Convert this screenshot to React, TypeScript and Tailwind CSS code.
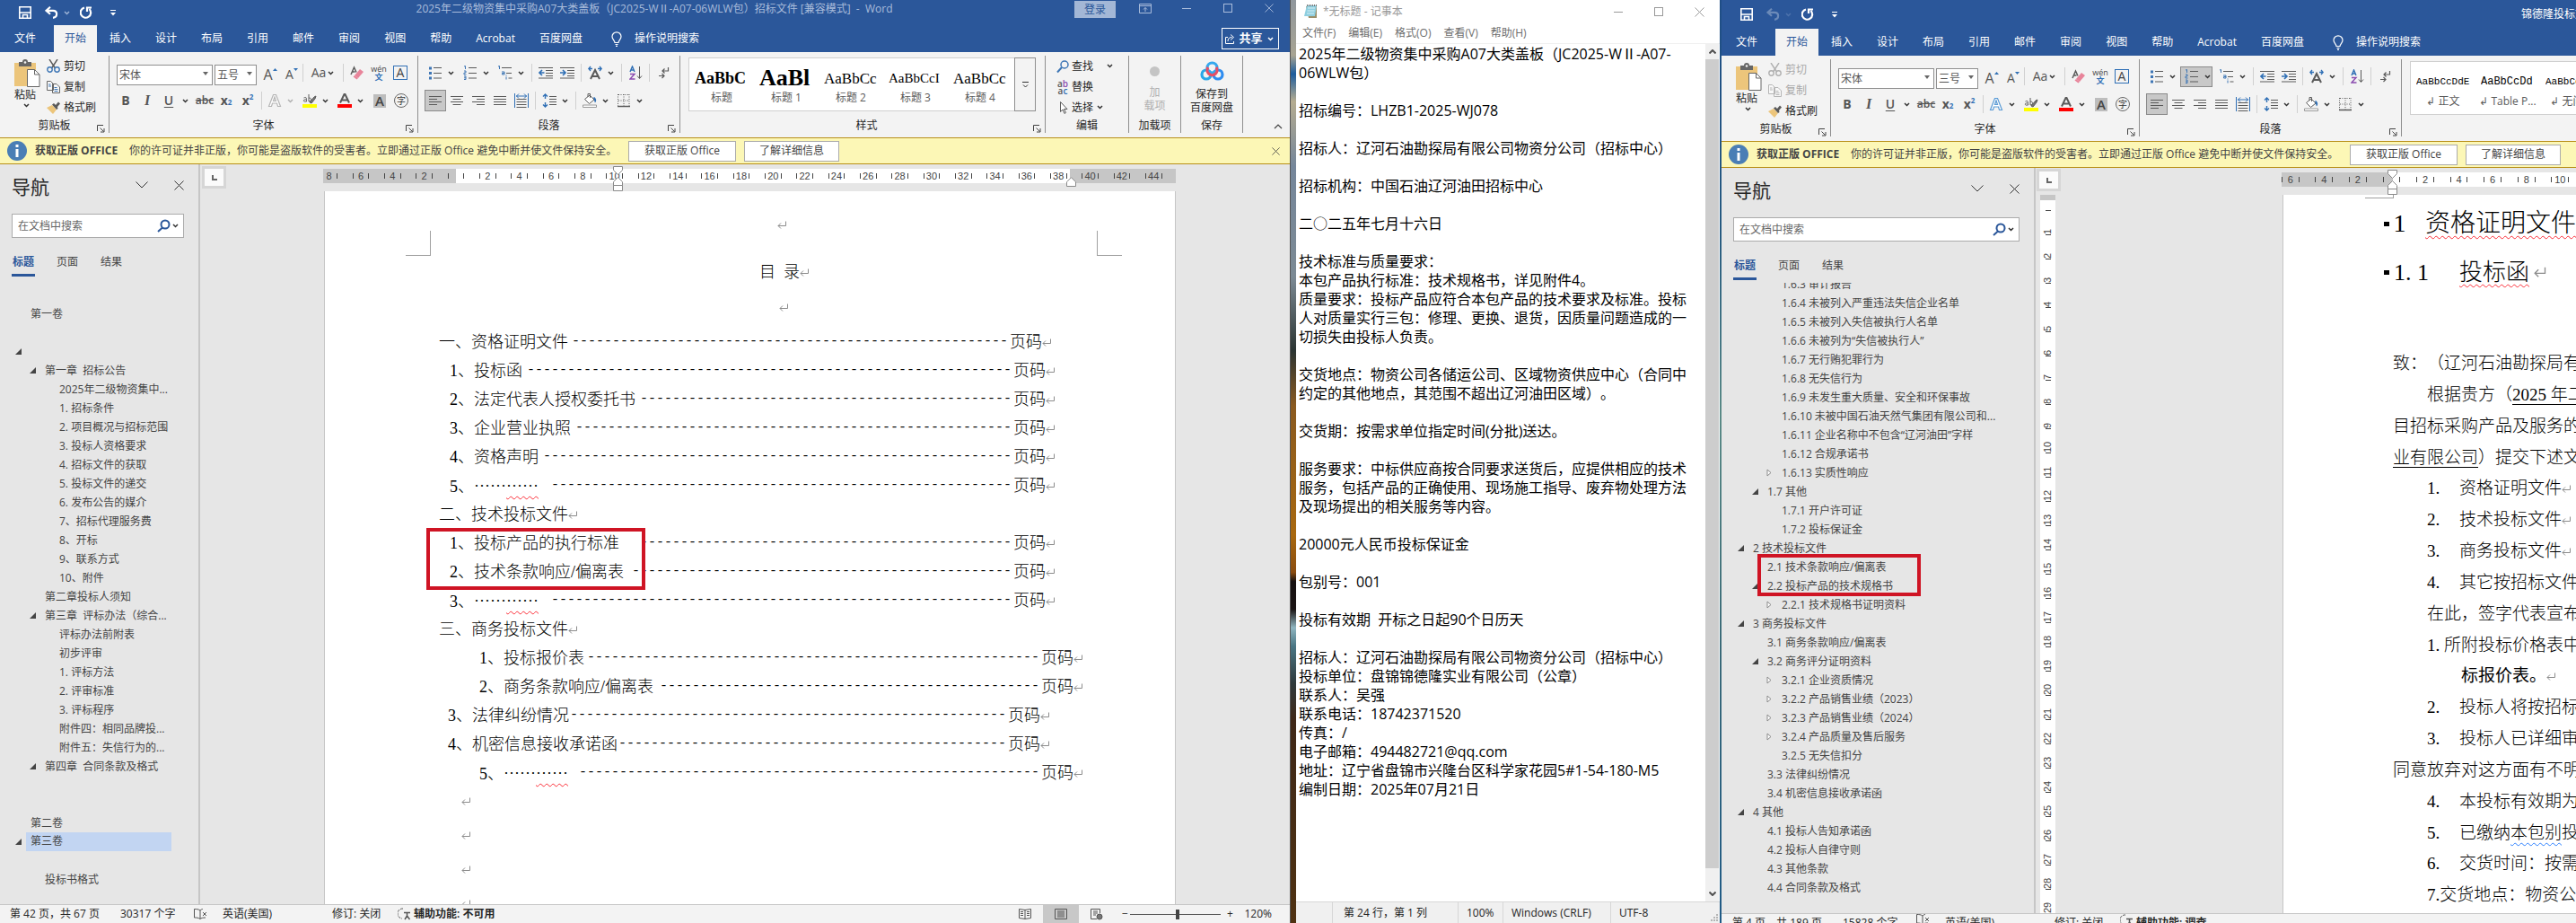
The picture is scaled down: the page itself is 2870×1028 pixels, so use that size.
import type { ReactNode } from "react";

const UI = "font-['Open_Sans','Noto_Sans_CJK_SC',sans-serif]";
const SONG = "font-['Liberation_Serif','Noto_Sans_CJK_SC',serif]";

/* ---------- small drawings ---------- */

function Chev({ className = "text-[#333]" }: { className?: string }) {
  return (
    <span className={`flex w-[10px] shrink-0 items-center justify-center ${className}`}>
      <svg width="7" height="5" viewBox="0 0 7 5" fill="none" stroke="currentColor" strokeWidth="1.5">
        <path d="M1 1l2.5 2.5L6 1" />
      </svg>
    </span>
  );
}

function Close({ size = 11 }: { size?: number }) {
  return (
    <svg width={size} height={size} viewBox="0 0 11 11" fill="none" stroke="currentColor">
      <path d="M.5 .5l10 10M10.5 .5l-10 10" />
    </svg>
  );
}

function Ret({ big = false }: { big?: boolean }) {
  return (
    <svg
      className="shrink-0 text-[#8c8c8c]"
      width={big ? 15 : 10}
      height={big ? 12 : 9}
      viewBox="0 0 10 9"
      fill="none"
      stroke="currentColor"
    >
      <path d="M9.5 .5v5H1M4 2.500L1 5.500l3 3" />
    </svg>
  );
}

function Pic({ children, w = 16, h = 16 }: { children: ReactNode; w?: number; h?: number }) {
  return (
    <svg width={w} height={h} viewBox={`0 0 ${w} ${h}`} fill="none" stroke="#5a5a5a" className="shrink-0">
      {children}
    </svg>
  );
}

function Btn({
  children,
  label,
  className = "",
}: {
  children: ReactNode;
  label: string;
  className?: string;
}) {
  return (
    <button aria-label={label} className={`flex h-6 w-6 shrink-0 items-center justify-center ${className}`}>
      {children}
    </button>
  );
}

function Sep({ className = "" }: { className?: string }) {
  return <span className={`h-5 w-px shrink-0 bg-[#d0d0d0] ${className}`} />;
}

function Launcher() {
  return (
    <button aria-label="更多选项" className="absolute right-1 bottom-0 text-[#444]">
      <svg width="9" height="9" viewBox="0 0 9 9" fill="none" stroke="currentColor">
        <path d="M.5 7V.5H7M3.500 3.500l4 4M8 4v4H4" />
      </svg>
    </button>
  );
}

function Group({
  label,
  launcher = false,
  className = "",
  children,
}: {
  label: string;
  launcher?: boolean;
  className?: string;
  children: ReactNode;
}) {
  return (
    <div className={`flex h-[86px] shrink-0 flex-col border-r border-[#8f8f8f] ${className}`}>
      {children}
      <div className="relative mt-auto h-[15px] text-center text-xs leading-[14px]">
        {label}
        {launcher && <Launcher />}
      </div>
    </div>
  );
}

/* ---------- ribbon ---------- */

function Clipboard({ canCut }: { canCut: boolean }) {
  const tone = canCut ? "text-[#262626]" : "text-[#a8a8a8]";
  return (
    <Group label="剪贴板" launcher className="w-[122px]">
      <div className="flex">
        <button className="ml-4 flex w-[30px] flex-col items-start text-xs">
          <svg className="mt-1" width="29" height="31" viewBox="0 0 29 31">
            <path d="M0 4h24v26H0z" fill="#ecc57b" />
            <path d="M5 3h4a3 3 0 0 1 6 0h4v5H5z" fill="#666" />
            <circle cx="12" cy="3.500" r="1.300" fill="#f3f3f3" />
            <path d="M14.500 11.500h8l5.500 5.500v13.500H14.500z" fill="#fff" stroke="#666" />
            <path d="M22.500 11.500v5.500h5.500" fill="none" stroke="#666" />
          </svg>
          <span className="leading-[18px]">粘贴</span>
          <Chev className="ml-2 text-[#333]" />
        </button>
        <div className="ml-[6px] flex flex-col text-xs">
          <button className={`flex h-[23px] items-center gap-1 ${tone}`}>
            <svg width="15" height="15" viewBox="0 0 15 15" fill="none" strokeWidth="1.400">
              <path d="M3 0l6.500 10M12 0L5.500 10" stroke={canCut ? "#5a5a5a" : "#b0b0b0"} />
              <circle cx="3.500" cy="11.500" r="2.700" stroke={canCut ? "#3e76b5" : "#b0b0b0"} />
              <circle cx="11.500" cy="11.500" r="2.700" stroke={canCut ? "#3e76b5" : "#b0b0b0"} />
            </svg>
            剪切
          </button>
          <button className={`flex h-[23px] items-center gap-1 ${tone}`}>
            <svg width="15" height="14" viewBox="0 0 15 14" fill="#f8f8f8" stroke={canCut ? "#666" : "#b5b5b5"}>
              <path d="M.5 .5h4l3 3v7h-7zM6.500 3.500h4.500l3.500 3.500v6.500h-8z" />
              <path d="M2 4h2.500M2 6h3M8.500 7.500h3M8.500 9.500h4M8.500 11.500h4" stroke={canCut ? "#3e76b5" : "#b5b5b5"} />
            </svg>
            复制
          </button>
          <button className="flex h-[23px] items-center gap-1">
            <svg width="15" height="14" viewBox="0 0 15 14">
              <path d="M0 7l6-3 5 5-4 5z" fill="#ecc57b" />
              <path d="M6 3.500l2-1.500 2 2 3-3.500L15 2.500 12 6l.5 2-1.500 1z" fill="#5a5a5a" />
            </svg>
            格式刷
          </button>
        </div>
      </div>
    </Group>
  );
}

function Pick({ label, value, className }: { label: string; value: string; className: string }) {
  return (
    <div className={`relative h-[23px] shrink-0 ${className}`}>
      <select
        aria-label={label}
        defaultValue={value}
        className="h-full w-full appearance-none border border-[#8f8f8f] bg-white pl-[2px] text-xs leading-5"
      >
        <option>{value}</option>
      </select>
      <svg className="pointer-events-none absolute top-[10px] right-[5px]" width="6" height="4" viewBox="0 0 6 4">
        <path d="M0 0h6L3 4z" fill="#666" />
      </svg>
    </div>
  );
}

function FontGroup({ size, effects }: { size: string; effects: boolean }) {
  return (
    <Group label="字体" launcher className="w-[344px]">
      <div className="mt-[7px] flex items-center pl-2 text-[#555]">
        <Pick label="字体" value="宋体" className="w-[107px]" />
        <Pick label="字号" value={size} className="ml-0.5 w-[47px]" />
        <Btn label="增大字号" className="ml-[3px]">
          <span className="pt-1 text-base leading-none">A</span>
          <svg className="mb-2" width="5" height="3" viewBox="0 0 5 3"><path d="M0 3h5L2.500 0z" fill="#2f6fb5" /></svg>
        </Btn>
        <Btn label="减小字号">
          <span className="pt-1 text-sm leading-none">A</span>
          <svg className="mb-2" width="5" height="3" viewBox="0 0 5 3"><path d="M0 0h5L2.500 3z" fill="#2f6fb5" /></svg>
        </Btn>
        <Sep />
        <button className="flex w-[44px] items-center justify-center text-sm">
          Aa
          <Chev />
        </button>
        <Sep />
        <Btn label="清除格式" className="ml-[3px]">
          <Pic>
            <path d="M1 10L4.500 2 7 7.500M2.500 7h3" strokeWidth="1.500" />
            <path d="M5 11l6-7 4 3-6 7z" fill="#e8849a" stroke="none" />
            <path d="M3.500 12.500L5 11l4 3-1.500 1.500z" fill="#e8849a" stroke="none" />
          </Pic>
        </Btn>
        <Btn label="拼音指南" className="flex-col">
          <span className="text-[9px] leading-[9px] text-[#444]">wén</span>
          <span className="text-[9px] leading-[10px] font-bold text-[#2f6fb5]">文</span>
        </Btn>
        <Btn label="字符边框">
          <span className="flex h-4 w-4 items-center justify-center border border-[#2f6fb5] text-sm leading-none text-[#444]">A</span>
        </Btn>
      </div>
      <div className="mt-[7px] flex items-center pl-[6px] text-[#555]">
        <Btn label="加粗" className="text-sm font-bold">B</Btn>
        <Btn label="倾斜" className={`text-base font-bold italic ${SONG}`}>I</Btn>
        <Btn label="下划线" className="text-sm font-semibold underline underline-offset-2">U</Btn>
        <Chev className="ml-px text-[#333]" />
        <Btn label="删除线" className="ml-[5px] text-xs font-semibold line-through">abc</Btn>
        <Btn label="下标" className="text-sm font-bold">
          x<sub className="text-[8px] text-[#2f6fb5]">2</sub>
        </Btn>
        <Btn label="上标" className="text-sm font-bold">
          x<sup className="text-[8px] text-[#2f6fb5]">2</sup>
        </Btn>
        <Sep className="ml-[3px]" />
        <Btn label="文本效果" className="ml-0.5">
          <svg width="16" height="16" viewBox="0 0 16 16" fill="#fff" stroke={effects ? "#5b9bd5" : "#b5b5b5"} strokeWidth="1.200">
            <path d="M1.500 14.500L6.500 1.500h3l5 13h-3L10.500 11h-5l-1 3.500zM6.500 8.500h3L8 4z" />
          </svg>
        </Btn>
        <Chev className={effects ? "text-[#333]" : "text-[#b0b0b0]"} />
        <Btn label="突出显示" className="ml-[5px]">
          <Pic>
            <path d="M0 12h16v4H0z" fill="#ff0" stroke="none" />
            <path d="M1.500 5c3-1.500 3 0 3 4-3 .5-3.500-.5-3-1.500.5-.7 1.500-.7 3-.7M7 1v8c3 0 4-4 0-4" />
            <path d="M8 10l5-6 2-1-1 3-4 5z" fill="#777" />
          </Pic>
        </Btn>
        <Chev />
        <Btn label="字体颜色" className="ml-[5px]">
          <Pic>
            <path d="M0 12h16v4H0z" fill="#f00" stroke="none" />
            <path d="M3 10.500L8 0l5 10.500M4.500 7.500h7" strokeWidth="2" />
          </Pic>
        </Btn>
        <Chev />
        <Btn label="字符底纹" className="ml-[5px]">
          <span className="flex h-[15px] w-[14px] items-center justify-center bg-[#bdbdbd] text-[15px] leading-none font-semibold text-[#444]">A</span>
        </Btn>
        <Btn label="带圈字符">
          <span className="flex h-4 w-4 items-center justify-center rounded-full border border-[#666] text-[10px] leading-none text-[#333]">字</span>
        </Btn>
      </div>
    </Group>
  );
}

const ALIGN = [
  { label: "左对齐", d: "M1 3.500h14M1 6.500h9M1 9.500h14M1 12.500h9" },
  { label: "居中", d: "M1 3.500h14M3.500 6.500h9M1 9.500h14M3.500 12.500h9" },
  { label: "右对齐", d: "M1 3.500h14M6 6.500h9M1 9.500h14M6 12.500h9" },
  { label: "两端对齐", d: "M1 3.500h14M1 6.500h14M1 9.500h14M1 12.500h14" },
];

function ParagraphGroup({ numbered }: { numbered: boolean }) {
  return (
    <Group label="段落" launcher className="w-[292px]">
      <div className="mt-[7px] flex items-center">
        <Btn label="项目符号" className="ml-[7px]">
          <Pic>
            <path d="M1 1.500h3v3H1zM1 7h3v3H1zM1 12.500h3v3H1z" fill="#3e76b5" stroke="none" />
            <path d="M6 2.500h9M6 8.500h9M6 14h9" />
          </Pic>
        </Btn>
        <Chev />
        <span
          className={
            numbered
              ? "ml-1 -mr-px flex h-[23px] w-9 items-center border border-[#8a8a8a] bg-[#c8c8c8]"
              : "ml-[5px] flex h-[23px] w-[34px] items-center"
          }
        >
          <Btn label="编号">
            <Pic>
              <path d="M1 1l1.500-.5V4M1 6h2v2H1v2h2.500M1 12h2v3.500H1M1 13.800h2" stroke="#3e76b5" />
              <path d="M6 2.500h9M6 8.500h9M6 14h9" />
            </Pic>
          </Btn>
          <Chev />
        </span>
        <Btn label="多级列表" className="ml-[5px]">
          <Pic>
            <path d="M0 1l1.500-.5V4M4 7h3v3H4.500V8.500H7M9 12.500v3M9 10.500v1" stroke="#3e76b5" />
            <path d="M4 2.500h11M9 8.500h6M11.500 14h4" />
          </Pic>
        </Btn>
        <Chev />
        <Sep className="ml-[7px]" />
        <Btn label="减少缩进" className="ml-[3px]">
          <Pic>
            <path d="M0 2.500h16M8 5.500h8M8 8.500h8M0 14h16M8 11.500h8" />
            <path d="M6.500 8H1M4 5L1 8l3 3" stroke="#2f6fb5" strokeWidth="1.600" />
          </Pic>
        </Btn>
        <Btn label="增加缩进">
          <Pic>
            <path d="M0 2.500h16M8 5.500h8M8 8.500h8M0 14h16M8 11.500h8" />
            <path d="M0 8h5.500M3 5l3 3-3 3" stroke="#2f6fb5" strokeWidth="1.600" />
          </Pic>
        </Btn>
        <Sep className="ml-[3px]" />
        <Btn label="中文版式" className="ml-[3px]">
          <Pic>
            <path d="M3 15L8 5l5 10M5 12h6" strokeWidth="2" />
            <path d="M5 3.500H1M3 1L.8 3.500 3 6M11 3.500h4M13 1l2.200 2.500L13 6" stroke="#2f6fb5" strokeWidth="1.300" />
          </Pic>
        </Btn>
        <Chev />
        <Sep className="ml-[7px]" />
        <Btn label="排序" className="ml-1">
          <Pic>
            <path d="M1 7L3.500 1 6 7M2 5h3" stroke="#2f6fb5" strokeWidth="1.400" />
            <path d="M1 9.500h5L1 15h5.500" stroke="#8a4bb0" strokeWidth="1.400" />
            <path d="M11.500 1v13M9 11.500l2.500 3 2.500-3" />
          </Pic>
        </Btn>
        <Sep className="ml-0.5" />
        <Btn label="显示标记" className="ml-[3px]">
          <Pic>
            <path d="M13.500 2v4H7M9.500 3.500L7 6l2.500 2.500M3 11.500h6M6.500 9L9 11.500 6.500 14" strokeWidth="1.200" />
          </Pic>
        </Btn>
      </div>
      <div className="mt-[7px] flex items-center pl-[7px]">
        {ALIGN.map((a, i) => (
          <Btn key={a.label} label={a.label} className={i === 0 ? "border border-[#8a8a8a] bg-[#c8c8c8]" : ""}>
            <Pic>
              <path d={a.d} />
            </Pic>
          </Btn>
        ))}
        <Btn label="分散对齐">
          <Pic>
            <path d="M2.500 6.500h11M2.500 9.500h11M2.500 12.500h11M2.500 15.500h11" />
            <path d="M.5 0v16M15.500 0v16M2 3h12M5 .5L2.500 3 5 5.500M11 .5L13.500 3 11 5.500" stroke="#2f6fb5" />
          </Pic>
        </Btn>
        <Sep className="ml-[3px]" />
        <Btn label="行距" className="ml-[3px]">
          <Pic>
            <path d="M3.500 1v5M1 3.500L3.500 1 6 3.500M3.500 15v-5M1 12.500L3.500 15 6 12.500" stroke="#2f6fb5" strokeWidth="1.400" />
            <path d="M8 3.500h8M8 6.500h8M8 9.500h8M8 12.500h8" />
          </Pic>
        </Btn>
        <Chev />
        <Sep className="ml-[7px]" />
        <Btn label="底纹" className="ml-[3px]">
          <Pic>
            <path d="M2.500 6.500L8 2l5 5-5.500 4.500zM6 4V.5h2.500V5" fill="#fff" />
            <path d="M13 4c3 2 2.500 5 1 6.500C13 9 13.500 7 12 5z" fill="#2f6fb5" stroke="none" />
            <path d="M.5 13h15v2.500H.5z" fill="#fff" stroke="#999" />
          </Pic>
        </Btn>
        <Chev />
        <Btn label="边框" className="ml-1">
          <Pic>
            <path d="M2 1.500h12M2 8h12M1.500 1v13M8 1v13M14 1v13" strokeDasharray="1 1.500" />
            <path d="M1 14.500h14" strokeWidth="1.500" />
          </Pic>
        </Btn>
        <Chev />
      </div>
    </Group>
  );
}

const STYLES_A = [
  { name: "标题", sample: "AaBbC", cls: "text-lg font-bold font-['Liberation_Serif',serif]" },
  { name: "标题 1", sample: "AaBl", cls: "text-[26px] font-bold font-['Liberation_Serif',serif]" },
  { name: "标题 2", sample: "AaBbCc", cls: "text-[17px] font-['Liberation_Serif',serif]" },
  { name: "标题 3", sample: "AaBbCcI", cls: "text-[15px] font-['Liberation_Serif',serif]" },
  { name: "标题 4", sample: "AaBbCc", cls: "text-[17px] font-['Liberation_Serif',serif]" },
];

const STYLES_B = [
  { name: "↲ 正文", sample: "AaBbCcDdE", cls: "text-[11px] font-['Liberation_Mono',monospace]" },
  { name: "↲ Table P...", sample: "AaBbCcDd", cls: "text-xs font-['Liberation_Mono',monospace]" },
  { name: "↲ 无间隔", sample: "AaBbCcDdE", cls: "text-[11px] font-['Liberation_Mono',monospace]" },
];

function StyleGroup({ styles, last }: { styles: typeof STYLES_A; last: boolean }) {
  return (
    <Group label={last ? "" : "样式"} launcher={!last} className="w-[407px] pl-[9px]">
      <div className="mt-0.5 mr-[10px] flex h-[60px] border border-[#d0d0d0] bg-white">
        {styles.map((s) => (
          <button key={s.name} className="flex w-[72px] shrink-0 flex-col items-center pt-2">
            <span className={`flex h-7 w-[60px] items-center overflow-hidden leading-none whitespace-nowrap text-black ${s.cls}`}>
              {s.sample}
            </span>
            <span className="text-xs leading-4 whitespace-nowrap text-[#5a5a5a]">{s.name}</span>
          </button>
        ))}
        <button aria-label="更多样式" className="-my-px -mr-px ml-auto flex w-6 items-center justify-center border border-[#8f8f8f] bg-[#f3f3f3]">
          <svg width="7" height="7" viewBox="0 0 7 7" fill="none" stroke="#333">
            <path d="M0 .5h7M1 3.500l2.500 2.500L6 3.500" />
          </svg>
        </button>
      </div>
    </Group>
  );
}

function TailGroups() {
  return (
    <>
      <Group label="编辑" className="w-[93px]">
        <div className="flex flex-col pl-3 text-xs">
          <button className="flex h-[23px] items-center gap-[3px]">
            <Pic w={14}>
              <circle cx="9" cy="6" r="4" stroke="#3e76b5" strokeWidth="1.500" />
              <path d="M6 9l-5 5.500" stroke="#3e76b5" strokeWidth="2" />
            </Pic>
            查找
            <Chev className="ml-[10px] text-[#333]" />
          </button>
          <button className="flex h-[23px] items-center gap-[3px]">
            <span className="flex w-[14px] flex-col text-[10px] leading-[8px] font-semibold">
              <span className="text-[#555]">a<span className="text-[#8a4bb0]">b</span></span>
              <span className="text-[#555]">a<span className="text-[#2f6fb5]">c</span></span>
            </span>
            替换
          </button>
          <button className="flex h-[23px] items-center gap-[3px]">
            <Pic w={14}>
              <path d="M4.500 1.500v11l2.500-2.500 2 4.500 1.500-1-2-4h3.500z" fill="#fff" />
            </Pic>
            选择
            <Chev className="-ml-px text-[#333]" />
          </button>
        </div>
      </Group>
      <Group label="加载项" className="w-[58px]">
        <button className="flex flex-col items-center text-xs leading-[15px] text-[#b0b0b0]">
          <span className="mt-3 mb-[10px] h-[11px] w-[11px] rounded-full bg-[#c4c4c4]" />
          <span>加</span>
          <span>载项</span>
        </button>
      </Group>
      <Group label="保存" className="w-[69px]">
        <button className="flex flex-col items-center text-xs leading-[15px]">
          <svg className="mt-[6px] mb-[7px]" width="27" height="22" viewBox="0 0 27 22" fill="none" strokeWidth="3.200">
            <circle cx="7" cy="15" r="5" stroke="#2aa7e8" />
            <circle cx="20" cy="15" r="5" stroke="#2f8df0" />
            <circle cx="13.500" cy="7.500" r="5.500" stroke="#35a8ee" />
            <path d="M9 11a5.500 5.500 0 1 1 9 0" stroke="#e84e64" transform="rotate(180 13.500 9)" />
          </svg>
          <span>保存到</span>
          <span>百度网盘</span>
        </button>
      </Group>
      <button aria-label="折叠功能区" className="mr-2 ml-auto self-end pb-1">
        <svg width="10" height="6" viewBox="0 0 10 6" fill="none" stroke="#444" strokeWidth="1.200">
          <path d="M1 5l4-4 4 4" />
        </svg>
      </button>
    </>
  );
}

/* ---------- window chrome ---------- */

const TABS = ["插入", "设计", "布局", "引用", "邮件", "审阅", "视图", "帮助", "Acrobat", "百度网盘"];

function QuickAccess({ canUndo }: { canUndo: boolean }) {
  return (
    <div className="flex flex-1 items-center pl-[21px] text-white">
      <button aria-label="保存">
        <svg width="14" height="14" viewBox="0 0 14 14" fill="none" stroke="currentColor" strokeWidth="1.600">
          <path d="M.8 .8h12.400v12.400H.8zM1 7h12M4.500 13v-3.500h5V13" />
        </svg>
      </button>
      <button aria-label="撤消" className={`ml-[15px] flex ${canUndo ? "" : "opacity-30"}`}>
        <svg width="15" height="14" viewBox="0 0 15 14" fill="none" stroke="currentColor" strokeWidth="2.200">
          <path d="M6 .8L1.500 4.800 6 8.800M2 4.800h7c5.500 0 5.500 7.500 0 8" />
        </svg>
        <Chev className="ml-1 text-[#9db3d6]" />
      </button>
      <button aria-label="重复" className="ml-[10px]">
        <svg width="14" height="14" viewBox="0 0 14 14" fill="none" stroke="currentColor" strokeWidth="2.200">
          <path d="M5 1.500A5.700 5.700 0 1 0 10.500 3M8 6V1.500h5" />
        </svg>
      </button>
      <button aria-label="自定义快速访问工具栏" className="ml-5">
        <svg width="6" height="7" viewBox="0 0 6 7">
          <path d="M0 0h6v1H0zM0 3h6L3 6.500z" fill="currentColor" />
        </svg>
      </button>
    </div>
  );
}

function TabRow({ share }: { share: boolean }) {
  return (
    <div className="flex h-[30px] shrink-0 gap-px bg-[#2b579a] text-xs whitespace-nowrap text-white">
      <button className="px-4">文件</button>
      <button className="ml-[3px] bg-[#f3f3f3] px-3 text-[#2b579a]">开始</button>
      {TABS.map((t) => (
        <button key={t} className="px-[13px]">
          {t}
        </button>
      ))}
      <button className="ml-[14px] flex items-center gap-[14px] pl-1">
        <svg width="12" height="17" viewBox="0 0 12 17" fill="none" stroke="currentColor" strokeWidth="1.200">
          <path d="M4 12.500c0-2.500-3-3.500-3-6.700a5 5 0 0 1 10 0c0 3.200-3 4.200-3 6.700zM4.500 14.500h3M5 16.400h2" />
        </svg>
        操作说明搜索
      </button>
      {share && (
        <button className="mt-[3px] mr-3 ml-auto flex h-6 w-[64px] items-center justify-center gap-1 border border-white">
          <svg width="11" height="12" viewBox="0 0 11 12" fill="none" stroke="currentColor">
            <path d="M3 4.500H.5v7h9V9M3 9c0-3 1.500-4.500 4.500-4.500M6 1.500l3.500 3L6 7.500" />
          </svg>
          <span className="text-[13px] font-semibold">共享</span>
          <Chev className="text-white" />
        </button>
      )}
    </div>
  );
}

function LicenceBar({ closable }: { closable: boolean }) {
  return (
    <div className="flex h-[30px] shrink-0 items-center border-y border-[#b8901a] bg-[#fcf7b6] pl-2 text-xs whitespace-nowrap text-[#444]">
      <svg className="shrink-0" width="22" height="22" viewBox="0 0 22 22">
        <circle cx="11" cy="11" r="11" fill="#4a7eb5" />
        <path d="M9.500 4h3v3h-3zM9.500 9h3v9h-3z" fill="#fff" />
      </svg>
      <b className="ml-[9px] w-24 shrink-0">获取正版 OFFICE</b>
      <span className="ml-[9px] w-[548px] shrink-0">
        你的许可证并非正版，你可能是盗版软件的受害者。立即通过正版 Office 避免中断并使文件保持安全。
      </span>
      <button className="ml-2 h-[23px] w-[120px] shrink-0 border border-[#ababab] bg-white">获取正版 Office</button>
      <button className="ml-[9px] h-[23px] w-[106px] shrink-0 border border-[#ababab] bg-white">了解详细信息</button>
      {closable && (
        <button aria-label="关闭消息" className="mr-[11px] ml-auto">
          <Close size={9} />
        </button>
      )}
    </div>
  );
}

/* ---------- navigation pane ---------- */

type Item = { t: string; l: 0 | 1 | 2; a?: "open" | "shut"; on?: boolean };

const PAD = ["pl-[17px]", "pl-[33px]", "pl-[49px]"];

const TREE_A: Item[] = [
  { t: "第一卷", l: 0 },
  { t: "", l: 0 },
  { t: "", l: 0, a: "open" },
  { t: "第一章  招标公告", l: 1, a: "open" },
  { t: "2025年二级物资集中...", l: 2 },
  { t: "1. 招标条件", l: 2 },
  { t: "2. 项目概况与招标范围", l: 2 },
  { t: "3. 投标人资格要求", l: 2 },
  { t: "4. 招标文件的获取", l: 2 },
  { t: "5. 投标文件的递交", l: 2 },
  { t: "6. 发布公告的媒介", l: 2 },
  { t: "7、招标代理服务费", l: 2 },
  { t: "8、开标", l: 2 },
  { t: "9、联系方式", l: 2 },
  { t: "10、附件", l: 2 },
  { t: "第二章投标人须知", l: 1 },
  { t: "第三章  评标办法（综合...", l: 1, a: "open" },
  { t: "评标办法前附表", l: 2 },
  { t: "初步评审", l: 2 },
  { t: "1. 评标方法", l: 2 },
  { t: "2. 评审标准", l: 2 },
  { t: "3. 评标程序", l: 2 },
  { t: "附件四：相同品牌投...", l: 2 },
  { t: "附件五：失信行为的...", l: 2 },
  { t: "第四章  合同条款及格式", l: 1, a: "open" },
  { t: "", l: 0 },
  { t: "", l: 0 },
  { t: "第二卷", l: 0 },
  { t: "第三卷", l: 0, a: "open", on: true },
  { t: "", l: 0 },
  { t: "投标书格式", l: 1 },
];

const TREE_B: Item[] = [
  { t: "1.6.3 审计报告", l: 2 },
  { t: "1.6.4 未被列入严重违法失信企业名单", l: 2 },
  { t: "1.6.5 未被列入失信被执行人名单", l: 2 },
  { t: "1.6.6 未被列为“失信被执行人”", l: 2 },
  { t: "1.6.7 无行贿犯罪行为", l: 2 },
  { t: "1.6.8 无失信行为", l: 2 },
  { t: "1.6.9 未发生重大质量、安全和环保事故", l: 2 },
  { t: "1.6.10 未被中国石油天然气集团有限公司和...", l: 2 },
  { t: "1.6.11 企业名称中不包含“辽河油田”字样", l: 2 },
  { t: "1.6.12 合规承诺书", l: 2 },
  { t: "1.6.13 实质性响应", l: 2, a: "shut" },
  { t: "1.7 其他", l: 1, a: "open" },
  { t: "1.7.1 开户许可证", l: 2 },
  { t: "1.7.2 投标保证金", l: 2 },
  { t: "2 技术投标文件", l: 0, a: "open" },
  { t: "2.1 技术条款响应/偏离表", l: 1 },
  { t: "2.2 投标产品的技术规格书", l: 1, a: "open" },
  { t: "2.2.1 技术规格书证明资料", l: 2, a: "shut" },
  { t: "3 商务投标文件", l: 0, a: "open" },
  { t: "3.1 商务条款响应/偏离表", l: 1 },
  { t: "3.2 商务评分证明资料", l: 1, a: "open" },
  { t: "3.2.1 企业资质情况", l: 2, a: "shut" },
  { t: "3.2.2 产品销售业绩（2023）", l: 2, a: "shut" },
  { t: "3.2.3 产品销售业绩（2024）", l: 2, a: "shut" },
  { t: "3.2.4 产品质量及售后服务", l: 2, a: "shut" },
  { t: "3.2.5 无失信扣分", l: 2 },
  { t: "3.3 法律纠纷情况", l: 1 },
  { t: "3.4 机密信息接收承诺函", l: 1 },
  { t: "4 其他", l: 0, a: "open" },
  { t: "4.1 投标人告知承诺函", l: 1 },
  { t: "4.2 投标人自律守则", l: 1 },
  { t: "4.3 其他条款", l: 1 },
  { t: "4.4 合同条款及格式", l: 1 },
];

function Tree({ items }: { items: Item[] }) {
  return (
    <ul className="text-xs whitespace-pre text-[#444]">
      {items.map((it, i) => (
        <li key={i} className={`flex h-[21px] items-center ${PAD[it.l]}`}>
          <span className="w-3 shrink-0">
            {it.a === "open" && (
              <svg width="7" height="7" viewBox="0 0 7 7"><path d="M7 0v7H0z" fill="#444" /></svg>
            )}
            {it.a === "shut" && (
              <svg width="7" height="9" viewBox="0 0 7 9" fill="#fff" stroke="#8a8a8a"><path d="M1 1v7l4-3.500z" /></svg>
            )}
          </span>
          <a href="#doc" className={it.on ? "h-[21px] w-[162px] bg-[#c2d5f2] pl-[5px] leading-[20px]" : "pl-[5px]"}>
            {it.t}
          </a>
        </li>
      ))}
    </ul>
  );
}

function NavPane({ id, className, children }: { id: string; className: string; children: ReactNode }) {
  return (
    <aside className={`flex shrink-0 flex-col overflow-hidden border-r-2 border-[#c6c6c6] ${className}`}>
      <div className="mt-[10px] flex h-8 items-center pl-[13px]">
        <h2 className="flex-1 text-[21px] text-[#262626]">导航</h2>
        <button aria-label="窗格选项" className="mr-[29px] mb-[6px]">
          <svg width="14" height="8" viewBox="0 0 14 8" fill="none" stroke="#333"><path d="M.5 .5L7 7l6.500-6.500" /></svg>
        </button>
        <button aria-label="关闭窗格" className="mr-4 mb-[6px] text-[#333]">
          <Close />
        </button>
      </div>
      <div className="mt-[13px] mr-4 ml-[13px] flex h-[27px] shrink-0 items-center border border-[#ababab] bg-white pr-1">
        <input
          id={id}
          aria-label="在文档中搜索"
          placeholder="在文档中搜索"
          className="min-w-0 flex-1 pl-[6px] text-xs outline-none placeholder:text-[#666]"
        />
        <svg width="15" height="15" viewBox="0 0 15 15" fill="none" stroke="#2b579a" strokeWidth="2">
          <circle cx="9" cy="6" r="4.500" />
          <path d="M6 9.500L1 14" />
        </svg>
        <Chev />
      </div>
      <div className="flex h-[43px] shrink-0 items-end gap-[25px] pl-[13px] text-xs text-[#444]">
        <button className="-mr-px h-[30px] border-b-[3px] border-[#2b579a] px-px font-semibold text-[#2b579a]">标题</button>
        <button className="h-[30px] border-b-[3px] border-transparent">页面</button>
        <button className="h-[30px] border-b-[3px] border-transparent">结果</button>
      </div>
      {children}
    </aside>
  );
}

/* ---------- rulers ---------- */

const RULE_A = ["8", "6", "4", "2", "", "2", "4", "6", "8", "10", "12", "14", "16", "18", "20", "22", "24", "26", "28", "30", "32", "34", "36", "38", "40", "42", "44"];
const RULE_B = ["6", "4", "2", "", "2", "4", "6", "8", "10"];

function Ticks({ marks, className }: { marks: string[]; className: string }) {
  return (
    <div className={`flex h-full font-['Liberation_Sans',sans-serif] text-[11px] text-[#444] ${className}`}>
      {marks.map((m, i) => (
        <span key={i} className="grid min-w-0 flex-1 grid-cols-[1fr_1px_2fr_1px_1fr] items-center">
          <i />
          <i className="h-[6px] bg-[#444]" />
          <span className="text-center">{m}</span>
          <i className="h-[6px] bg-[#444]" />
        </span>
      ))}
    </div>
  );
}

function TabStop() {
  return (
    <div className="flex h-[25px] w-[27px] shrink-0 items-center justify-center border-[3px] border-[#d6d6d6] bg-[#fbfbfb]">
      <span className="h-[6px] w-[6px] border-b-2 border-l-2 border-[#666]" />
    </div>
  );
}

function Indents({ className }: { className: string }) {
  return (
    <svg className={`absolute ${className}`} width="11" height="28" viewBox="0 0 11 28" fill="#fff" stroke="#8a8a8a">
      <path d="M.5 .5h10v4L5.500 9.500l-5-5zM5.500 12.500l5 5v4H.5v-4zM.5 21.500h10v6H.5z" />
    </svg>
  );
}

/* ---------- status bar ---------- */

function StatusLeft({ items }: { items: string[] }) {
  return (
    <>
      <span className="w-[123px]">{items[0]}</span>
      <span className="w-[82px]">{items[1]}</span>
      <span className="w-8">
        <svg width="15" height="12" viewBox="0 0 15 12" fill="none" stroke="#555">
          <path d="M7 2C5 .5 3 .5 .5 .5v9.500C3 10 5 10 7 11.500zM7 2c1-1 2-1.500 3-1.500M7 11.500c1-1 3-1.500 6-1.500M10 4l4 4M14 4l-4 4" />
        </svg>
      </span>
      <span className="w-[122px]">英语(美国)</span>
      <span className="w-[73px]">修订: 关闭</span>
      <span className="w-[18px]">
        <svg width="15" height="14" viewBox="0 0 15 14" fill="none" stroke="#555">
          <path d="M6 1A5.500 5.500 0 0 0 5 12" strokeDasharray="3 1" />
          <path d="M7 5.500h7M10.500 6v3M8 13l2.500-4 3 4M10.500 2.500v.1" strokeWidth="1.500" />
        </svg>
      </span>
      <span className="font-semibold">{items[2]}</span>
    </>
  );
}

/* ---------- documents ---------- */

type Line = { pos: string; t: string; dots?: boolean; n: number };

const P0 = "ml-[127px] w-[682px]";
const P1 = "ml-[139px] w-[674px]";
const P2 = "ml-[172px] w-[672px]";
const P3 = "ml-[137px] w-[670px]";

const TOC: Line[] = [
  { pos: P0, t: "一、资格证明文件", n: 54 },
  { pos: P1, t: "1、投标函", n: 60 },
  { pos: P1, t: "2、法定代表人授权委托书", n: 46 },
  { pos: P1, t: "3、企业营业执照", n: 54 },
  { pos: P1, t: "4、资格声明", n: 58 },
  { pos: P1, t: "5、", dots: true, n: 57 },
  { pos: P0, t: "二、技术投标文件", n: 0 },
  { pos: P1, t: "1、投标产品的执行标准", n: 46 },
  { pos: P1, t: "2、技术条款响应/偏离表", n: 47 },
  { pos: P1, t: "3、", dots: true, n: 57 },
  { pos: P0, t: "三、商务投标文件", n: 0 },
  { pos: P2, t: "1、投标报价表", n: 56 },
  { pos: P2, t: "2、商务条款响应/偏离表", n: 47 },
  { pos: P3, t: "3、法律纠纷情况", n: 54 },
  { pos: P3, t: "4、机密信息接收承诺函", n: 48 },
  { pos: P2, t: "5、", dots: true, n: 57 },
];

function TocLine({ line }: { line: Line }) {
  return (
    <div className={`flex h-8 items-center ${line.pos}`}>
      <span>
        {line.t}
        {line.dots && (
          <span className="font-['Noto_Sans_CJK_SC',sans-serif]">
            ……
            <span className="underline decoration-red-500 decoration-wavy decoration-1 underline-offset-4">……</span>
          </span>
        )}
      </span>
      {line.n > 0 && (
        <span className="ml-auto flex items-center">
          <span className="font-['Liberation_Mono',monospace] text-[15px] font-normal">{"-".repeat(line.n)}</span>
          <span className="ml-0.5">页码</span>
        </span>
      )}
      <Ret />
    </div>
  );
}

function TocDoc() {
  return (
    <div className="flex min-w-0 flex-1 flex-col overflow-hidden">
      <div className="relative flex h-[30px] shrink-0">
        <div className="pt-0.5 pl-0.5">
          <TabStop />
        </div>
        <div className="mt-[5px] ml-[108px] h-4 w-[950px] overflow-hidden bg-[linear-gradient(to_right,#c6c6c6_148px,#fff_148px,#fff_832px,#c6c6c6_832px)]">
          <Ticks marks={RULE_A} className="-ml-[11px] w-[954px]" />
        </div>
        <Indents className="top-0.5 left-[460px]" />
        <svg className="absolute top-[14px] left-[965px]" width="11" height="11" viewBox="0 0 11 11" fill="#fff" stroke="#8a8a8a">
          <path d="M5.500 .7l5 5v4.800H.5V5.700z" />
        </svg>
      </div>
      <article
        id="doc"
        className={`relative ml-[138px] min-h-0 w-[949px] flex-1 overflow-hidden border-x border-[#c6c6c6] bg-white text-lg leading-8 font-light whitespace-nowrap text-black ${SONG}`}
      >
        <div className="mt-[27px] flex h-5 items-center pl-[504px]"><Ret /></div>
        <div className="-mt-[3px] mr-[59px] ml-[90px] flex h-7 justify-between">
          <i className="w-7 border-r border-b border-[#a0a0a0]" />
          <i className="w-7 border-b border-l border-[#a0a0a0]" />
        </div>
        <h1 className="mt-0.5 flex h-8 items-center pl-[484px]">
          目&nbsp;&nbsp;录
          <Ret />
        </h1>
        <div className="mt-[7px] mb-[7px] flex h-8 items-center pl-[506px]"><Ret /></div>
        {TOC.map((l, i) => (
          <TocLine key={i} line={l} />
        ))}
        <div className="-mt-1 pl-[152px]">
          {[0, 1, 2, 3].map((i) => (
            <div key={i} className="flex h-[38px] items-center"><Ret /></div>
          ))}
        </div>
        <div className="absolute top-[375px] left-[113px] h-[69px] w-[244px] border-4 border-[#cf1424]" />
      </article>
    </div>
  );
}

const BODY: { p: string; n?: string; c: ReactNode; end?: boolean }[] = [
  { p: "", c: "致：（辽河石油勘探局有限公司" },
  { p: "pl-[38px]", c: <>根据贵方（<u className="underline-offset-4">2025 年二级物资</u></> },
  { p: "", c: "目招标采购产品及服务的投标" },
  { p: "", c: <><u className="underline-offset-4">业有限公司</u>）提交下述文件</> },
  { p: "pl-[38px]", n: "1.", c: "资格证明文件", end: true },
  { p: "pl-[38px]", n: "2.", c: "技术投标文件", end: true },
  { p: "pl-[38px]", n: "3.", c: "商务投标文件", end: true },
  { p: "pl-[38px]", n: "4.", c: "其它按招标文件要求" },
  { p: "pl-[38px]", c: "在此，签字代表宣布如下" },
  { p: "pl-[38px]", c: "1. 所附投标价格表中规定" },
  { p: "pl-[76px]", c: <b>标报价表。</b>, end: true },
  { p: "pl-[38px]", n: "2.", c: "投标人将按招标文件" },
  { p: "pl-[38px]", n: "3.", c: "投标人已详细审查" },
  { p: "", c: "同意放弃对这方面有不明及" },
  { p: "pl-[38px]", n: "4.", c: "本投标有效期为自" },
  {
    p: "pl-[38px]",
    n: "5.",
    c: <>已缴纳<span className="underline decoration-blue-500 decoration-wavy decoration-1 underline-offset-4">本包别</span>投标</>,
  },
  { p: "pl-[38px]", n: "6.", c: "交货时间：按需求单位" },
  { p: "pl-[38px]", c: "7.交货地点：物资公司" },
];

function LetterDoc() {
  return (
    <div className="flex min-w-0 flex-1 overflow-hidden">
      <div className="flex w-[30px] shrink-0 flex-col pt-px pl-px">
        <TabStop />
        <div className="mt-1 ml-1 min-h-0 w-[17px] flex-1 overflow-hidden border-t-[6px] border-[#c6c6c6] bg-white pt-[11px] font-['Liberation_Sans',sans-serif] text-[11px] text-[#444]">
          {Array.from({ length: 29 }).map((_, i) => (
            <div key={i} className="flex h-[27px] flex-col items-center">
              <i className="h-px w-[6px] shrink-0 bg-[#444]" />
              <span className="flex flex-1 rotate-180 items-center leading-none [writing-mode:vertical-rl]">{i + 1}</span>
            </div>
          ))}
        </div>
      </div>
      <div className="relative ml-[244px] flex min-w-0 flex-1 flex-col">
        <div className="mt-[5px] mb-[9px] h-4 shrink-0 overflow-hidden bg-[linear-gradient(to_right,#c6c6c6_124px,#fff_124px)]">
          <Ticks marks={RULE_B} className="-ml-[9px] w-[338px]" />
        </div>
        <Indents className="top-0.5 left-[118px]" />
        <article
          className={`ml-px min-h-0 flex-1 overflow-hidden border-l border-[#c6c6c6] bg-white font-light whitespace-nowrap text-black ${SONG}`}
        >
          <i className="ml-[91px] block h-1 w-[32px] border-r border-b border-[#a0a0a0]" />
          <h1 className="mt-1 flex h-[48px] items-center pl-[112px] text-[28px]">
            <span className="mr-[5px] h-[5px] w-[6px] bg-black" />
            <span className="w-[38px]">1</span>
            <span className="underline decoration-red-500 decoration-wavy decoration-1 underline-offset-4">资格证明文件</span>
          </h1>
          <h2 className="mt-[5px] flex h-[50px] items-center pl-[112px] text-[26px]">
            <span className="mr-[5px] h-[5px] w-[6px] bg-black" />
            <span className="w-[73px]">1. 1</span>
            <span className="mr-1 underline decoration-red-500 decoration-wavy decoration-1 underline-offset-4">投标函</span>
            <Ret big />
          </h2>
          <div className="mt-[60px] grid h-[627px] auto-rows-fr pl-[122px] text-[19px]">
            {BODY.map((b, i) => (
              <p key={i} className={`flex items-center ${b.p}`}>
                {b.n && <span className="w-9 shrink-0">{b.n}</span>}
                <span>{b.c}</span>
                {b.end && <Ret />}
              </p>
            ))}
          </div>
        </article>
      </div>
    </div>
  );
}

/* ---------- windows ---------- */

function WordLeft() {
  return (
    <section className="flex min-w-0 flex-col overflow-hidden bg-[#e6e6e6] text-[#262626]">
      <header className="flex h-7 shrink-0 bg-[#2b579a] text-xs text-[#a9bcdb]">
        <QuickAccess canUndo />
        <span className="pt-0.5 whitespace-pre">2025年二级物资集中采购A07大类盖板（JC2025-WⅡ-A07-06WLW包）招标文件 [兼容模式]  -  Word</span>
        <div className="flex flex-1 items-start justify-end">
          <button className="mt-px mr-[10px] h-[19px] w-[46px] bg-[#a3b7d6] text-[#2b579a]">登录</button>
          <button aria-label="功能区显示选项" className="flex h-[18px] w-[46px] items-center justify-center">
            <svg width="14" height="11" viewBox="0 0 14 11" fill="none" stroke="currentColor">
              <path d="M.5 .5h13v10H.5zM.5 2.500h13M7 9V4.500M5 6.500l2-2 2 2" />
            </svg>
          </button>
          <button aria-label="最小化" className="flex h-[18px] w-[46px] items-center justify-center">
            <i className="h-px w-[10px] bg-current" />
          </button>
          <button aria-label="最大化" className="flex h-[18px] w-[46px] items-center justify-center">
            <i className="h-[10px] w-[10px] border border-current" />
          </button>
          <button aria-label="关闭" className="flex h-[18px] w-[46px] items-center justify-center">
            <Close size={10} />
          </button>
        </div>
      </header>
      <TabRow share />
      <div className="flex h-[95px] shrink-0 overflow-hidden bg-[#f3f3f3] pt-1 pb-[5px]">
        <Clipboard canCut />
        <FontGroup size="五号" effects={false} />
        <ParagraphGroup numbered={false} />
        <StyleGroup styles={STYLES_A} last={false} />
        <TailGroups />
      </div>
      <LicenceBar closable />
      <div className="flex min-h-0 flex-1">
        <NavPane id="find-a" className="w-[223px]">
          <div className="mt-[31px]">
            <Tree items={TREE_A} />
          </div>
        </NavPane>
        <TocDoc />
      </div>
      <footer className="flex h-[21px] shrink-0 items-center border-t border-[#c6c6c6] bg-[#f3f3f3] pl-[11px] text-xs whitespace-nowrap">
        <StatusLeft items={["第 42 页，共 67 页", "30317 个字", "辅助功能: 不可用"]} />
        <button aria-label="阅读视图" className="ml-auto flex h-full w-10 items-center justify-center">
          <svg width="14" height="12" viewBox="0 0 14 12" fill="none" stroke="#555">
            <path d="M7 1.500L.5 .5v10l6.500 1 6.500-1V.5zM7 1.500v10M2 3.500h3M2 5.500h3M2 7.500h3M9 3.500h3M9 5.500h3M9 7.500h3" />
          </svg>
        </button>
        <button aria-label="页面视图" className="flex h-full w-10 items-center justify-center bg-[#c8c8c8]">
          <svg width="14" height="12" viewBox="0 0 14 12" fill="none" stroke="#555">
            <path d="M.5 .5h13v11H.5zM3 3h8M3 5h8M3 7h8M3 9h8" />
          </svg>
        </button>
        <button aria-label="Web 版式视图" className="flex h-full w-10 items-center justify-center">
          <svg width="14" height="13" viewBox="0 0 14 13" fill="none" stroke="#555">
            <path d="M7 11.500H.5V.5h10V5M3 3h5M3 5h5M3 7h3" />
            <circle cx="10" cy="9" r="3" fill="#777" />
          </svg>
        </button>
        <button aria-label="缩小" className="ml-[5px] w-3">−</button>
        <input
          type="range"
          aria-label="显示比例"
          defaultValue={52}
          className="h-4 w-[101px] appearance-none bg-[linear-gradient(#555,#555)] bg-[length:100%_1px] bg-center bg-no-repeat [&::-webkit-slider-thumb]:h-[11px] [&::-webkit-slider-thumb]:w-1 [&::-webkit-slider-thumb]:appearance-none [&::-webkit-slider-thumb]:bg-[#444]"
        />
        <button aria-label="放大" className="ml-1 w-3">+</button>
        <span className="mr-5 ml-[10px]">120%</span>
      </footer>
    </section>
  );
}

function WordRight() {
  return (
    <section className="flex min-w-0 flex-col overflow-hidden bg-[#e6e6e6] text-[#262626]">
      <header className="flex h-8 shrink-0 items-center bg-[#2b579a] text-xs text-white">
        <QuickAccess canUndo={false} />
        <span className="w-[61px] overflow-hidden whitespace-nowrap">锦德隆投标文件</span>
      </header>
      <TabRow share={false} />
      <div className="flex h-[95px] shrink-0 overflow-hidden bg-[#f3f3f3] pt-1 pb-[5px]">
        <Clipboard canCut={false} />
        <FontGroup size="三号" effects />
        <ParagraphGroup numbered />
        <StyleGroup styles={STYLES_B} last />
      </div>
      <LicenceBar closable={false} />
      <div className="flex min-h-0 flex-1">
        <NavPane id="find-b" className="w-[350px]">
          <div className="relative mt-[3px] min-h-0 flex-1 overflow-hidden">
            <div className="-mt-[9px] pl-px">
              <Tree items={TREE_B} />
            </div>
            <div className="absolute top-[302px] left-10 h-[47px] w-[182px] border-4 border-[#cf1424]" />
          </div>
        </NavPane>
        <LetterDoc />
      </div>
      {/* the window runs past the bottom of the desktop */}
      <footer className="flex h-[11px] shrink-0 items-start overflow-hidden border-t border-[#c6c6c6] bg-[#f3f3f3] pl-3 text-xs leading-5 whitespace-nowrap">
        <StatusLeft items={["第 4 页，共 189 页", "15828 个字", "辅助功能: 调查"]} />
      </footer>
    </section>
  );
}

const NOTE = `2025年二级物资集中采购A07大类盖板（JC2025-WⅡ-A07-
06WLW包）

招标编号：LHZB1-2025-WJ078

招标人：辽河石油勘探局有限公司物资分公司（招标中心）

招标机构：中国石油辽河油田招标中心

二○二五年七月十六日

技术标准与质量要求：
本包产品执行标准：技术规格书，详见附件4。
质量要求：投标产品应符合本包产品的技术要求及标准。投标
人对质量实行三包：修理、更换、退货，因质量问题造成的一
切损失由投标人负责。

交货地点：物资公司各储运公司、区域物资供应中心（合同中
约定的其他地点，其范围不超出辽河油田区域）。

交货期：按需求单位指定时间(分批)送达。

服务要求：中标供应商按合同要求送货后，应提供相应的技术
服务，包括产品的正确使用、现场施工指导、废弃物处理方法
及现场提出的相关服务等内容。

20000元人民币投标保证金

包别号：001

投标有效期  开标之日起90个日历天

招标人：辽河石油勘探局有限公司物资分公司（招标中心）
投标单位：盘锦锦德隆实业有限公司（公章）
联系人：吴强
联系电话：18742371520
传真：/
电子邮箱：494482721@qq.com
地址：辽宁省盘锦市兴隆台区科学家花园5#1-54-180-M5
编制日期：2025年07月21日`;

function Notepad() {
  return (
    <section className="flex min-w-0 flex-col overflow-hidden bg-white">
      <header className="flex h-[26px] shrink-0 items-center pl-[9px] text-xs text-[#999]">
        <svg className="mr-[6px]" width="15" height="16" viewBox="0 0 15 16">
          <path d="M2 2h12v13H5z" fill="#9a8f6a" />
          <path d="M3 1h11l-2 12H0z" fill="#8fcfe0" />
          <path d="M4 4h8M3.500 7h8M3 10h8" stroke="#d8f0f6" />
          <path d="M3 1h11" stroke="#777" strokeDasharray="1 1" strokeWidth="2" />
        </svg>
        <span className="flex-1">*无标题 - 记事本</span>
        <button aria-label="最小化" className="flex w-[45px] justify-center"><i className="h-px w-[10px] bg-current" /></button>
        <button aria-label="最大化" className="flex w-[46px] justify-center"><i className="h-[10px] w-[10px] border border-current" /></button>
        <button aria-label="关闭" className="flex w-[45px] justify-center"><Close /></button>
      </header>
      <nav className="flex h-[23px] shrink-0 items-center gap-[14px] border-b border-[#f0f0f0] pl-[7px] text-xs whitespace-nowrap text-[#6d6d6d]">
        {["文件(F)", "编辑(E)", "格式(O)", "查看(V)", "帮助(H)"].map((m) => (
          <button key={m}>{m}</button>
        ))}
      </nav>
      <div className="flex min-h-0 flex-1">
        <textarea
          aria-label="文本编辑器"
          defaultValue={NOTE}
          spellCheck={false}
          className="min-w-0 flex-1 resize-none overflow-hidden pt-px pl-[3px] text-base leading-[21px] whitespace-pre text-black outline-none"
        />
        <div className="mr-px flex w-[15px] shrink-0 flex-col items-center bg-[#f0f0f0] text-[#505050]">
          <svg className="my-[6px]" width="8" height="5" viewBox="0 0 8 5" fill="none" stroke="currentColor" strokeWidth="2"><path d="M.5 4.500L4 1l3.500 3.500" /></svg>
          <div className="w-full flex-1 bg-[#cdcdcd]" />
          <svg className="mt-[26px] mb-[6px]" width="8" height="5" viewBox="0 0 8 5" fill="none" stroke="currentColor" strokeWidth="2"><path d="M.5 .5L4 4 7.500 .5" /></svg>
        </div>
      </div>
      <footer className="flex h-6 shrink-0 items-center border-t border-[#d7d7d7] bg-[#f0f0f0] text-xs whitespace-nowrap text-[#222]">
        <span className="h-full w-[41px] border-r border-[#d7d7d7]" />
        <span className="flex h-full w-[140px] items-center border-r border-[#d7d7d7] pl-3">第 24 行，第 1 列</span>
        <span className="flex h-full w-[50px] items-center border-r border-[#d7d7d7] pl-[9px]">100%</span>
        <span className="flex h-full w-[120px] items-center border-r border-[#d7d7d7] pl-[9px]">Windows (CRLF)</span>
        <span className="pl-[9px]">UTF-8</span>
        <svg className="mt-auto mr-0.5 mb-0.5 ml-auto" width="8" height="8" viewBox="0 0 8 8" fill="#b5b5b5">
          <path d="M6 0h2v2H6zM3 3h2v2H3zM6 3h2v2H6zM0 6h2v2H0zM3 6h2v2H3zM6 6h2v2H6z" />
        </svg>
      </footer>
    </section>
  );
}

export default function App() {
  return (
    <main
      lang="zh-CN"
      className={`grid h-screen grid-cols-[1437fr_7px_472fr_2px_952fr] grid-rows-[100%] overflow-hidden [text-spacing-trim:space-all] ${UI}`}
    >
      <WordLeft />
      <div className="border-l border-[#555] bg-[linear-gradient(#8f969c_0%,#a8a493_6%,#1d5c9c_8%,#b5ac90_11%,#75869a_18%,#7c8a94_30%,#2b3432_38%,#8a5a20_44%,#a8680f_58%,#8a4c10_62%,#151010_63%,#1a1414_66%,#8fb5c0_68%,#4a7684_70%,#303a3c_74%,#3f2818_78%,#4f3212_100%)]" />
      <Notepad />
      <div className="bg-[linear-gradient(#1f4e86_0%,#265a80_25%,#5a8a86_45%,#3a6a78_70%,#1f5a86_100%)]" />
      <WordRight />
    </main>
  );
}
